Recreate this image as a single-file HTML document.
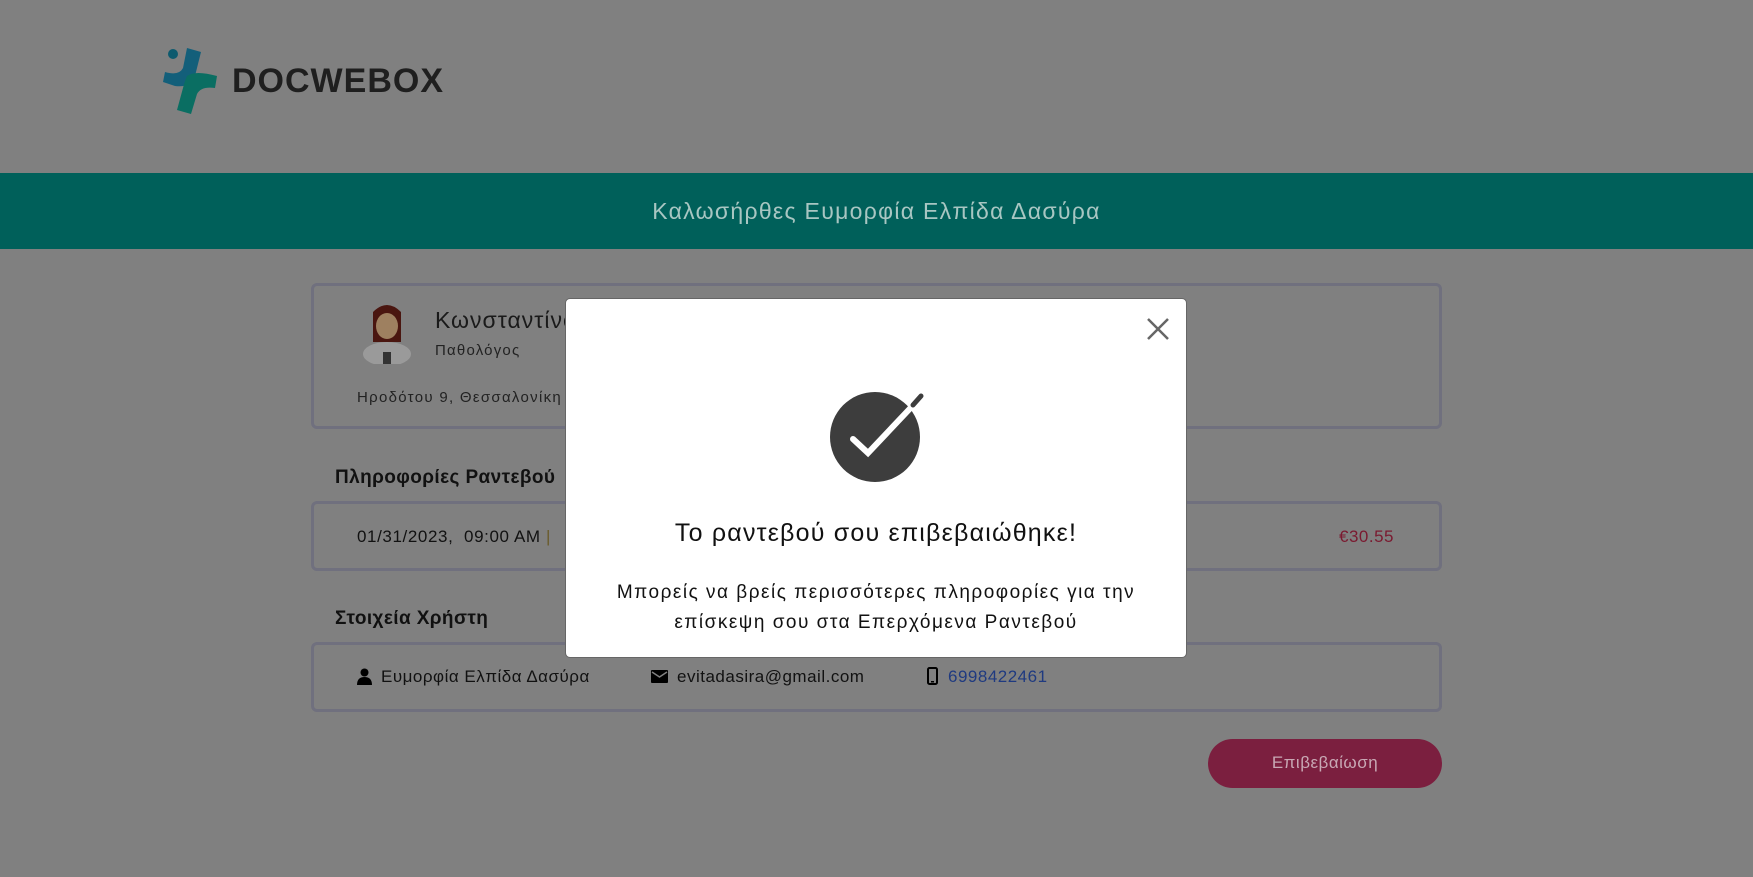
<!DOCTYPE html>
<html><head><meta charset="utf-8"><style>
*{margin:0;padding:0;box-sizing:border-box}
body{width:1753px;height:877px;background:#808080;font-family:"Liberation Sans",sans-serif;position:relative;overflow:hidden;color:#111}
.abs{position:absolute}
.card{position:absolute;left:311px;width:1131px;border:3px solid #70707e;border-radius:6px}
.t{position:absolute;white-space:nowrap}
</style></head><body>
<svg class="abs" style="left:158px;top:46px" width="66" height="68" viewBox="0 0 60 68">
<circle cx="12" cy="8" r="5" fill="#0d5a6e"/>
<path d="M26 2 L40 6 L34 30 Q30 42 14 40 L2 36 L4 26 Q18 30 22 22 Z" fill="#135f7a"/>
<path d="M26 30 Q34 24 56 30 L54 42 Q40 40 36 48 L30 68 L16 64 L22 42 Q24 34 26 30Z" fill="#0a6e62"/>
</svg>
<div class="t" style="left:232px;top:62px;font-size:34px;font-weight:bold;color:#1f1f1f;letter-spacing:1px">DOCWEBOX</div>
<div class="abs" style="left:0;top:173px;width:1753px;height:76px;background:#00605a"></div>
<div class="t" style="left:0;width:1753px;top:198px;text-align:center;font-size:23px;letter-spacing:1.3px;color:#a8c6c2">Καλωσήρθες Ευμορφία Ελπίδα Δασύρα</div>
<div class="card" style="top:283px;height:146px"></div>
<svg class="abs" style="left:359px;top:302px" width="56" height="62" viewBox="0 0 56 62">
<ellipse cx="28" cy="52" rx="24" ry="12" fill="#9a9a9a"/>
<rect x="24" y="50" width="8" height="12" fill="#333"/>
<path d="M14 10 Q28 -4 42 10 L42 40 L14 40Z" fill="#4a1610"/>
<ellipse cx="28" cy="24" rx="11" ry="13" fill="#9e8060"/>
</svg>
<div class="t" style="left:435px;top:307px;font-size:23px;letter-spacing:1px;color:#1a1a1a">Κωνσταντίνος</div>
<div class="t" style="left:435px;top:342px;font-size:15px;letter-spacing:1.2px;color:#222">Παθολόγος</div>
<div class="t" style="left:357px;top:389px;font-size:15px;letter-spacing:1.3px;color:#222">Ηροδότου 9, Θεσσαλονίκη</div>
<div class="t" style="left:335px;top:467px;font-size:19px;font-weight:bold;letter-spacing:0.4px;color:#111">Πληροφορίες Ραντεβού</div>
<div class="card" style="top:501px;height:70px"></div>
<div class="t" style="left:357px;top:527px;font-size:17px;letter-spacing:0.6px;color:#111">01/31/2023,&nbsp; 09:00 AM <span style="color:#6a5a2a">|</span></div>
<div class="t" style="left:1339px;top:527px;font-size:17px;letter-spacing:0.5px;color:#7a1a30">€30.55</div>
<div class="t" style="left:335px;top:608px;font-size:19px;font-weight:bold;letter-spacing:0.4px;color:#111">Στοιχεία Χρήστη</div>
<div class="card" style="top:642px;height:70px"></div>
<svg class="abs" style="left:357px;top:668px" width="15" height="17" viewBox="0 0 15 17"><circle cx="7.5" cy="4.5" r="4" fill="#000"/><path d="M0 17 Q0 9 7.5 9 Q15 9 15 17Z" fill="#000"/></svg>
<div class="t" style="left:381px;top:667px;font-size:17px;letter-spacing:0.5px">Ευμορφία Ελπίδα Δασύρα</div>
<svg class="abs" style="left:651px;top:670px" width="17" height="13" viewBox="0 0 17 13"><rect width="17" height="13" rx="1" fill="#000"/><path d="M1 2 L8.5 7 L16 2" stroke="#808080" stroke-width="1.5" fill="none"/></svg>
<div class="t" style="left:677px;top:667px;font-size:17px;letter-spacing:0.5px">evitadasira@gmail.com</div>
<svg class="abs" style="left:927px;top:667px" width="11" height="18" viewBox="0 0 11 18"><rect x="1" y="1" width="9" height="16" rx="1.5" fill="none" stroke="#000" stroke-width="2"/><rect x="4" y="14" width="3" height="1.5" fill="#000"/></svg>
<div class="t" style="left:948px;top:667px;font-size:17px;letter-spacing:0.5px;color:#1f3a80">6998422461</div>
<div class="abs" style="left:1208px;top:739px;width:234px;height:49px;border-radius:25px;background:#7b1f3f"></div>
<div class="t" style="left:1208px;width:234px;top:753px;text-align:center;font-size:17px;letter-spacing:0.5px;color:#c8a8b4">Επιβεβαίωση</div>
<div class="abs" style="left:565px;top:298px;width:622px;height:360px;background:#fff;border-radius:5px;border:1px solid #666"></div>
<svg class="abs" style="left:1146px;top:317px" width="24" height="24" viewBox="0 0 24 24"><path d="M2 2L22 22M22 2L2 22" stroke="#666" stroke-width="2.5"/></svg>
<svg class="abs" style="left:829px;top:389px" width="98" height="94" viewBox="0 0 98 94">
<circle cx="46" cy="48" r="45" fill="#3d3d3d"/>
<path d="M24 50 L39 64 L90 10" stroke="#fff" stroke-width="6" stroke-linecap="round" fill="none"/>
<path d="M84 16 L92 7" stroke="#3d3d3d" stroke-width="5" stroke-linecap="round"/>
</svg>
<div class="t" style="left:565px;width:622px;top:519px;text-align:center;font-size:25px;letter-spacing:1.2px;color:#111">Το ραντεβού σου επιβεβαιώθηκε!</div>
<div class="t" style="left:565px;width:622px;top:578px;text-align:center;font-size:19px;letter-spacing:1.5px;color:#111;line-height:30px;white-space:normal">Μπορείς να βρείς περισσότερες πληροφορίες για την<br>επίσκεψη σου στα Επερχόμενα Ραντεβού</div>
</body></html>
